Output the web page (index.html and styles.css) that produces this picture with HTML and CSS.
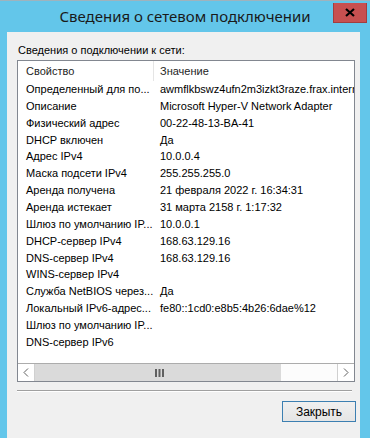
FILE: index.html
```html
<!DOCTYPE html>
<html lang="ru">
<head>
    <meta charset="UTF-8">
    <title>Сведения о сетевом подключении</title>
    <link rel="stylesheet" href="styles.css">
</head>
<body>
    <div class="window">
        <div class="titlebar">
            <div></div>
            <div class="title">Сведения о сетевом подключении</div>
            <button class="close-btn" aria-label="Закрыть">
                <svg width="10" height="9" viewBox="0 0 10 9">
                    <path d="M1 1 L9 8 M9 1 L1 8" stroke="#000" stroke-width="2.2" fill="none"/>
                </svg>
            </button>
        </div>

        <div class="client">
            <div class="caption">Сведения о подключении к сети:</div>

            <div class="listview">
                <div class="lv-header">
                    <div class="col col-name">Свойство</div>
                    <div class="col col-value">Значение</div>
                </div>

                <div class="lv-body" id="rows"></div>

                <div class="hscroll">
                    <div class="sb-arrow sb-left">
                        <svg width="6" height="9" viewBox="0 0 6 9"><path d="M5 0.5 L1 4.5 L5 8.5" stroke="#606060" fill="none"/></svg>
                    </div>
                    <div class="sb-thumb">
                        <svg width="9" height="8" viewBox="0 0 9 8">
                            <rect x="0" y="0" width="2" height="8" fill="#606060"/>
                            <rect x="3.5" y="0" width="2" height="8" fill="#606060"/>
                            <rect x="7" y="0" width="2" height="8" fill="#606060"/>
                        </svg>
                    </div>
                    <div class="sb-track"></div>
                    <div class="sb-arrow sb-right">
                        <svg width="6" height="9" viewBox="0 0 6 9"><path d="M1 0.5 L5 4.5 L1 8.5" stroke="#606060" fill="none"/></svg>
                    </div>
                </div>
            </div>

            <div class="separator"></div>

            <div class="buttons">
                <button class="btn btn-default">Закрыть</button>
            </div>
        </div>
    </div>

    <script>
        // Property / value pairs shown in the list
        const details = [
            ['Определенный для по...', 'awmflkbswz4ufn2m3izkt3raze.frax.interna'],
            ['Описание', 'Microsoft Hyper-V Network Adapter'],
            ['Физический адрес', '00-22-48-13-BA-41'],
            ['DHCP включен', 'Да'],
            ['Адрес IPv4', '10.0.0.4'],
            ['Маска подсети IPv4', '255.255.255.0'],
            ['Аренда получена', '21 февраля 2022 г. 16:34:31'],
            ['Аренда истекает', '31 марта 2158 г. 1:17:32'],
            ['Шлюз по умолчанию IP...', '10.0.0.1'],
            ['DHCP-сервер IPv4', '168.63.129.16'],
            ['DNS-сервер IPv4', '168.63.129.16'],
            ['WINS-сервер IPv4', ''],
            ['Служба NetBIOS через...', 'Да'],
            ['Локальный IPv6-адрес...', 'fe80::1cd0:e8b5:4b26:6dae%12'],
            ['Шлюз по умолчанию IP...', ''],
            ['DNS-сервер IPv6', '']
        ];

        const rowsContainer = document.getElementById('rows');

        rowsContainer.innerHTML = details.map(([name, value]) => `
            <div class="lv-row">
                <div class="col col-name">${name}</div>
                <div class="col col-value">${value}</div>
            </div>
        `).join('');
    </script>
</body>
</html>
```

FILE: styles.css
```css
/* Reset */
* {
    box-sizing: border-box;
    margin: 0;
    padding: 0;
}

body {
    width: 370px;
    height: 438px;
    overflow: hidden;
    background: #63c6ea;
    font-family: "Liberation Sans", Arial, sans-serif;
    font-size: 11px;
    color: #000;
}

/* Window frame */
.window {
    height: 438px;
    display: flex;
    flex-direction: column;
    border-top: 1px solid #9fb3bd;
}

.titlebar {
    height: 31px;
    display: grid;
    grid-template-columns: 1fr auto 1fr;
    align-items: start;
}

.title {
    font-family: "Noto Sans", sans-serif;
    font-size: 15px;
    color: #1a1a1a;
    line-height: 30px;
}

.close-btn {
    justify-self: end;
    width: 34px;
    height: 20px;
    margin: 2px 3px 0 0;
    background: #c75050;
    border: 1px solid #a33d3d;
    border-top: none;
    display: flex;
    align-items: center;
    justify-content: center;
}

/* Client area */
.client {
    flex: 1;
    margin: 0 10px 0 7px;
    background: #f0f0f0;
    padding: 11px 5px 0 10px;
}

.caption {
    height: 17px;
    line-height: 15px;
    padding-left: 1px;
}

/* List view */
.listview {
    height: 322px;
    border: 1px solid #828790;
    background: #fff;
    display: flex;
    flex-direction: column;
    overflow: hidden;
}

.lv-header {
    height: 20px;
    display: flex;
    flex-shrink: 0;
    background: #fff;
    color: #1e1e1e;
}

.lv-header .col {
    line-height: 20px;
}

.lv-header .col-name {
    border-right: 1px solid #e5e5e5;
}

.lv-body {
    flex: 1;
    overflow: hidden;
}

.lv-row {
    height: 16.87px;
    display: flex;
}

.col {
    white-space: nowrap;
    overflow: hidden;
    line-height: 17px;
}

.col-name {
    width: 136px;
    flex-shrink: 0;
    padding-left: 8px;
}

.col-value {
    flex: 1;
    padding-left: 6px;
}

/* Horizontal scrollbar */
.hscroll {
    height: 18px;
    flex-shrink: 0;
    display: flex;
    border-top: 1px solid #acacac;
    background: #fff;
}

.sb-arrow {
    width: 17px;
    display: flex;
    align-items: center;
    justify-content: center;
    background: #fff;
}

.sb-left {
    border-right: 1px solid #d0d0d0;
}

.sb-right {
    border-left: 1px solid #d0d0d0;
}

.sb-thumb {
    width: 246px;
    background: #dadada;
    display: flex;
    align-items: center;
    justify-content: center;
    padding-left: 3px;
}

.sb-track {
    flex: 1;
    background: #fcfcfc;
}

/* Separator */
.separator {
    margin: 8px 3px 0 0;
    height: 2px;
    border-top: 1px solid #a0a0a0;
    border-bottom: 1px solid #fff;
}

/* Buttons */
.buttons {
    display: flex;
    justify-content: flex-end;
    padding-top: 9px;
}

.btn {
    width: 74px;
    height: 21px;
    font-family: "Liberation Sans", Arial, sans-serif;
    font-size: 12px;
    color: #000;
    background: linear-gradient(#f0f0f0, #e5e5e5);
    border: 1px solid #acacac;
    margin-right: -1px;
}

.btn-default {
    border-color: #3c7fb1;
}
```
